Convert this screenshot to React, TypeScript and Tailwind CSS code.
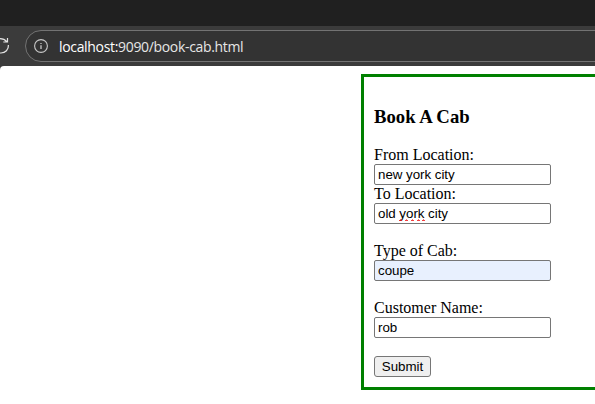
import React from 'react';

const inputClass =
  'block h-[21px] w-[177px] rounded-[2px] border border-[#767676] px-[3px] py-0 font-["Liberation_Sans",Arial,sans-serif] text-[13.333px] leading-[15px] tracking-[-0.03px] text-black outline-none';

function Toolbar() {
  return (
    <header className="shrink-0">
      <div className="h-[26px] bg-[#202020]" />
      <div className="flex h-10 items-start bg-[#3b3b3b]">
        <svg className="mt-[11px] h-[18px] w-[25px] shrink-0" viewBox="0 0 25 18" fill="none" stroke="#e4e4e4" strokeWidth="1.2">
          <path d="M0 1.6Q4.3 1.6 7.1 4.8M7.5 1v4H3.3M8.4 8C8.7 12.6 5.4 16 1 16H0" />
        </svg>
        <div className="mt-1 -mr-5 flex h-8 grow items-center rounded-l-full border border-[#737373] bg-[#333333] pl-2">
          <svg className="h-[14px] w-[14px] shrink-0" viewBox="0 0 14 14" fill="none" stroke="#c8c8c8">
            <circle cx="7" cy="7" r="6.4" strokeWidth="1.1" />
            <path d="M7 6.2v3.8M7 3.9v1.2" strokeWidth="1.3" />
          </svg>
          <div className='mt-px ml-[11px] w-[185px] font-["Open_Sans",sans-serif] text-[14px] leading-[18px] tracking-[-0.33px] whitespace-nowrap text-[#e6e6e6]'>
            <span className="text-white">localhost:</span>9090/book-cab.html
          </div>
        </div>
      </div>
    </header>
  );
}

export default function App() {
  return (
    <div className="flex h-[404px] w-[595px] flex-col overflow-hidden bg-[#3b3b3b]">
      <Toolbar />
      <main className='flex grow rounded-tl-[4px] bg-white pt-2 pl-[361px] font-["Liberation_Serif","Times_New_Roman",serif] text-[16px] leading-[18px] text-black'>
        <form className="h-[316px] w-[300px] shrink-0 border-[3px] border-[#008000] p-[10px]" onSubmit={(e) => e.preventDefault()}>
          <h3 className="mt-[19px] mb-[18px] text-[18.72px] leading-[22px] font-bold">Book A Cab</h3>
          <label className="block">From Location:</label>
          <input className={inputClass} defaultValue="new york city" spellCheck={false} />
          <label className="block">To Location:</label>
          <div className="relative">
            <input className={inputClass} defaultValue="old york city" spellCheck={false} />
            <svg className="absolute top-[16px] left-[25px] h-[2px] w-[26px]" viewBox="0 0 26 2" fill="none" stroke="#f02020">
              <path d="M1 .5h1M7 .5h1M13 .5h1M19 .5h1M24 .5h1" strokeOpacity="0.6" />
              <path d="M0 1.5h3M6 1.5h3M12 1.5h3M18 1.5h3M23 1.5h3" strokeOpacity="0.85" />
            </svg>
          </div>
          <label className="mt-[18px] block">Type of Cab:</label>
          <input className={inputClass + ' bg-[#e8f0fe]'} defaultValue="coupe" spellCheck={false} />
          <label className="mt-[18px] block">Customer Name:</label>
          <input className={inputClass} defaultValue="rob" spellCheck={false} />
          <button className='mt-[18px] block h-[21px] w-[57px] rounded-[3px] border border-[#767676] bg-[#efefef] font-["Liberation_Sans",Arial,sans-serif] text-[13.333px] leading-[15px]'>
            Submit
          </button>
        </form>
      </main>
    </div>
  );
}
